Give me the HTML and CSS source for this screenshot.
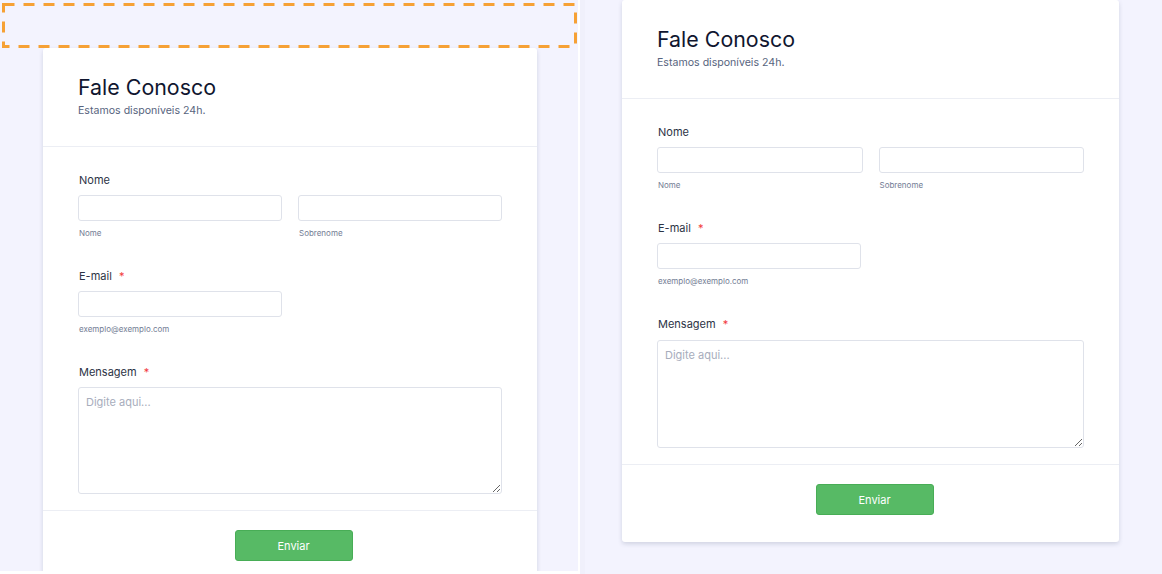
FILE: index.html
```html
<!DOCTYPE html>
<html lang="pt-BR">
<head>
<meta charset="utf-8">
<title>Fale Conosco</title>
<link rel="stylesheet" href="styles.css">
</head>
<body>
<div class="split">
  <section class="pane pane-left">
    <div class="card">
      <header class="card-head">
        <h1 class="title">Fale Conosco</h1>
        <p class="subtitle">Estamos disponíveis 24h.</p>
      </header>
      <div class="card-body">
        <div class="field">
          <label class="label">Nome</label>
          <div class="name-row">
            <div class="sub"><input class="input" type="text"><span class="sublabel">Nome</span></div>
            <div class="sub"><input class="input" type="text"><span class="sublabel">Sobrenome</span></div>
          </div>
        </div>
        <div class="field">
          <label class="label">E-mail <span class="req">*</span></label>
          <div class="sub half"><input class="input" type="email"><span class="sublabel">exemplo@exemplo.com</span></div>
        </div>
        <div class="field field-msg">
          <label class="label">Mensagem <span class="req">*</span></label>
          <textarea class="textarea" placeholder="Digite aqui..."></textarea>
        </div>
      </div>
      <footer class="card-foot"><button class="btn" type="button">Enviar</button></footer>
    </div>
    <svg class="highlight" width="578" height="50" viewBox="0 0 578 50">
      <rect x="3.5" y="4.5" width="572" height="42" fill="none" stroke="#f6a135" stroke-width="3" stroke-dasharray="11 9"/>
    </svg>
  </section>
  <div class="gutter"></div>
  <section class="pane pane-right">
    <div class="card card-wide">
      <header class="card-head">
        <h1 class="title">Fale Conosco</h1>
        <p class="subtitle">Estamos disponíveis 24h.</p>
      </header>
      <div class="card-body">
        <div class="field">
          <label class="label">Nome</label>
          <div class="name-row">
            <div class="sub"><input class="input" type="text"><span class="sublabel">Nome</span></div>
            <div class="sub"><input class="input" type="text"><span class="sublabel">Sobrenome</span></div>
          </div>
        </div>
        <div class="field">
          <label class="label">E-mail <span class="req">*</span></label>
          <div class="sub half"><input class="input" type="email"><span class="sublabel">exemplo@exemplo.com</span></div>
        </div>
        <div class="field field-msg">
          <label class="label">Mensagem <span class="req">*</span></label>
          <textarea class="textarea" placeholder="Digite aqui..."></textarea>
        </div>
      </div>
      <footer class="card-foot"><button class="btn" type="button">Enviar</button></footer>
    </div>
  </section>
</div>
</body>
</html>
```
FILE: styles.css
```css
* { box-sizing: border-box; }

html, body {
  margin: 0;
  height: 100%;
  background: #ffffff;
  font-family: Inter, "Noto Sans", "Liberation Sans", sans-serif;
  overflow: hidden;
}

.split {
  display: flex;
  height: 574px;
}

.pane {
  background: #f3f3fe;
  overflow: hidden;
}

.pane-left {
  position: relative;
  width: 578px;
  height: 571px;
  padding-top: 48px;
  padding-left: 43px;
}

.gutter {
  width: 2px;
  background: #ffffff;
}

.pane-right {
  flex: 1;
  display: flex;
  justify-content: flex-start;
  padding-left: 37px;
  border-left: 5px solid #f0f0fb;
}

.card {
  width: 494px;
  background: #ffffff;
  border-radius: 3px;
  box-shadow: 0 2px 4px rgba(87, 100, 126, 0.22);
  align-self: flex-start;
}

.card-wide {
  width: 497px;
}

.card-head {
  padding: 25px 35px 27px 35px;
  border-bottom: 1px solid #eceef4;
}

.title {
  margin: 0;
  font-size: 21.4px;
  line-height: 28px;
  font-weight: 400;
  color: #10162f;
}

.subtitle {
  margin: 2px 0 0;
  font-size: 10.6px;
  line-height: 16px;
  color: #57647e;
}

.card-body {
  padding: 25px 35px 16px 35px;
  display: flex;
  flex-direction: column;
  gap: 29px;
}

.field {
  display: flex;
  flex-direction: column;
  gap: 7px;
}

.field-msg {
  gap: 8px;
}

.pane-left .field-msg {
  gap: 7px;
}

.label {
  font-size: 11px;
  line-height: 16px;
  color: #2c3345;
  padding-left: 1px;
}

.req {
  color: #f23a3c;
  margin-left: 4px;
}

.name-row {
  display: grid;
  grid-template-columns: 1fr 1fr;
  column-gap: 16px;
}

.sub {
  display: flex;
  flex-direction: column;
  gap: 6px;
}

.half {
  width: 204px;
}

.input {
  width: 100%;
  height: 26px;
  border: 1px solid #dfe2ea;
  border-radius: 3px;
  background: #ffffff;
  margin: 0;
  padding: 0 8px;
  font: inherit;
}

.sublabel {
  font-size: 8px;
  line-height: 12px;
  color: #737d94;
  padding-left: 1px;
}

.textarea {
  display: block;
  width: 100%;
  height: 108px;
  margin: 0;
  border: 1px solid #dfe2ea;
  border-radius: 3px;
  padding: 6px 7px;
  font-family: inherit;
  font-size: 11px;
  line-height: 16px;
  color: #2c3345;
  resize: vertical;
}

.pane-left .textarea {
  height: 107px;
}

.textarea::placeholder {
  color: #a7adbc;
}

.card-foot {
  border-top: 1px solid #eceef4;
  padding: 19px 0 27px 8px;
  display: flex;
  justify-content: center;
}

.pane-left .card-foot {
  padding-left: 7px;
}

.btn {
  width: 118px;
  height: 31px;
  background: #57ba65;
  border: 1px solid #48ad56;
  border-radius: 3px;
  color: #ffffff;
  font-family: inherit;
  font-size: 11px;
  cursor: pointer;
}

.highlight {
  position: absolute;
  top: 0;
  left: 0;
}
```
